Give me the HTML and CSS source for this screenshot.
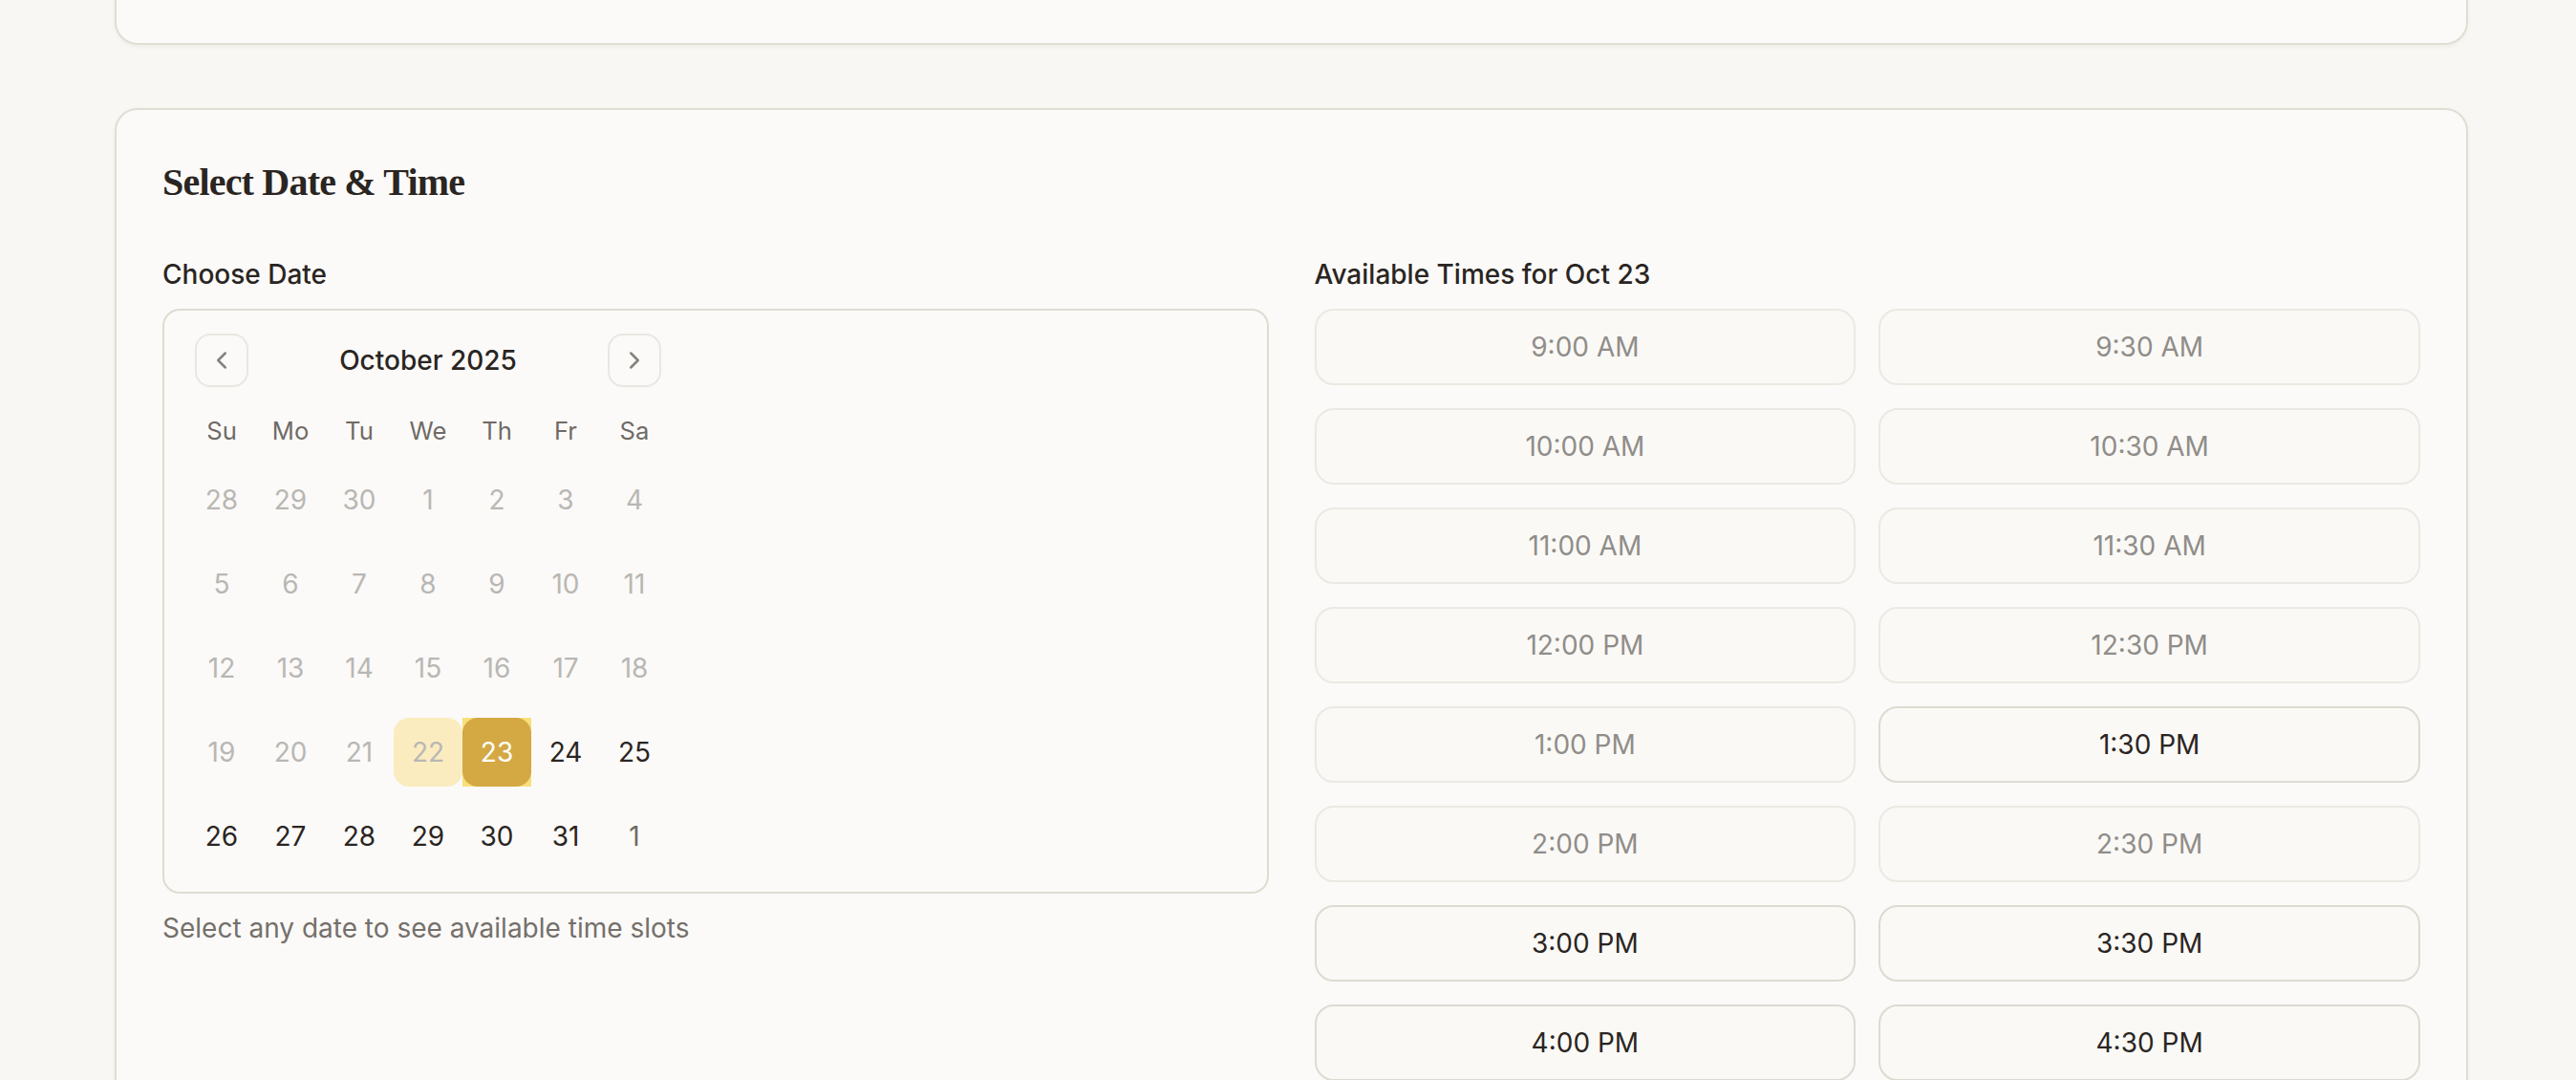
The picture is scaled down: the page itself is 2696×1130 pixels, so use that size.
FILE: index.html
```html
<!DOCTYPE html>
<html lang="en">
<head>
<meta charset="utf-8">
<title>Select Date &amp; Time</title>
<link rel="stylesheet" href="styles.css">
</head>
<body>
<div class="page">
  <section class="card card-prev"></section>

  <section class="card">
    <h2 class="card-title">Select Date &amp; Time</h2>
    <div class="columns">
      <div class="col">
        <div class="label">Choose Date</div>
        <div class="cal-box">
          <div class="cal">
            <div class="cal-caption">
              <button class="nav-btn nav-prev" aria-label="Previous month">
                <svg viewBox="0 0 24 24" width="30" height="30" fill="none" stroke="currentColor" stroke-width="2" stroke-linecap="round" stroke-linejoin="round"><path d="m15 18-6-6 6-6"/></svg>
              </button>
              <span class="cal-label">October 2025</span>
              <button class="nav-btn nav-next" aria-label="Next month">
                <svg viewBox="0 0 24 24" width="30" height="30" fill="none" stroke="currentColor" stroke-width="2" stroke-linecap="round" stroke-linejoin="round"><path d="m9 18 6-6-6-6"/></svg>
              </button>
            </div>
            <div class="cal-head">
              <span>Su</span><span>Mo</span><span>Tu</span><span>We</span><span>Th</span><span>Fr</span><span>Sa</span>
            </div>
            <div class="cal-row">
              <span class="day off">28</span><span class="day off">29</span><span class="day off">30</span><span class="day off">1</span><span class="day off">2</span><span class="day off">3</span><span class="day off">4</span>
            </div>
            <div class="cal-row">
              <span class="day off">5</span><span class="day off">6</span><span class="day off">7</span><span class="day off">8</span><span class="day off">9</span><span class="day off">10</span><span class="day off">11</span>
            </div>
            <div class="cal-row">
              <span class="day off">12</span><span class="day off">13</span><span class="day off">14</span><span class="day off">15</span><span class="day off">16</span><span class="day off">17</span><span class="day off">18</span>
            </div>
            <div class="cal-row">
              <span class="day off">19</span><span class="day off">20</span><span class="day off">21</span><span class="day off today">22</span><span class="day sel-wrap"><span class="sel">23</span></span><span class="day">24</span><span class="day">25</span>
            </div>
            <div class="cal-row">
              <span class="day">26</span><span class="day">27</span><span class="day">28</span><span class="day">29</span><span class="day">30</span><span class="day">31</span><span class="day outside">1</span>
            </div>
          </div>
        </div>
        <p class="hint">Select any date to see available time slots</p>
      </div>

      <div class="col">
        <div class="label">Available Times for Oct 23</div>
        <div class="times">
          <button class="slot disabled">9:00 AM</button>
          <button class="slot disabled">9:30 AM</button>
          <button class="slot disabled">10:00 AM</button>
          <button class="slot disabled">10:30 AM</button>
          <button class="slot disabled">11:00 AM</button>
          <button class="slot disabled">11:30 AM</button>
          <button class="slot disabled">12:00 PM</button>
          <button class="slot disabled">12:30 PM</button>
          <button class="slot disabled">1:00 PM</button>
          <button class="slot">1:30 PM</button>
          <button class="slot disabled">2:00 PM</button>
          <button class="slot disabled">2:30 PM</button>
          <button class="slot">3:00 PM</button>
          <button class="slot">3:30 PM</button>
          <button class="slot">4:00 PM</button>
          <button class="slot">4:30 PM</button>
        </div>
      </div>
    </div>
  </section>
</div>
</body>
</html>
```

FILE: styles.css
```css
* { box-sizing: border-box; }

html, body {
  margin: 0;
  padding: 0;
  background: #f8f7f3;
  font-family: Inter, "Noto Sans", "Liberation Sans", sans-serif;
  color: #2a2522;
}

.page {
  width: 2463px;
  margin-left: 120px;
  display: flex;
  flex-direction: column;
  gap: 66px;
}

.card {
  background: #fbfaf8;
  border: 2px solid #e0ded3;
  border-radius: 24px;
  padding: 48px;
  box-shadow: 0 2px 4px rgba(60, 50, 30, 0.05);
}

.card-prev {
  height: 247px;
  margin-top: -200px;
}

.card-title {
  margin: 0 0 48px;
  font-family: "Liberation Serif", "DejaVu Serif", serif;
  font-weight: 700;
  font-size: 40px;
  line-height: 56px;
  color: #2a2522;
  letter-spacing: -0.8px;
}

.columns {
  display: grid;
  grid-template-columns: 1fr 1fr;
  column-gap: 48px;
}

.label {
  font-size: 28px;
  line-height: 40px;
  font-weight: 500;
  margin-bottom: 16px;
  color: #2a2522;
}

.cal-box {
  border: 2px solid #dedcd1;
  border-radius: 18px;
  padding: 24px 24px 22px;
}

.cal {
  width: 504px;
}

.cal-caption {
  position: relative;
  height: 48px;
  padding-top: 8px;
  margin-bottom: 32px;
  display: flex;
  justify-content: center;
}

.cal-label {
  font-size: 28px;
  line-height: 40px;
  font-weight: 500;
  color: #2a2522;
}

.nav-btn {
  position: absolute;
  top: 0;
  width: 56px;
  height: 56px;
  border: 2px solid #e9e7e1;
  border-radius: 16px;
  background: transparent;
  color: #86827d;
  display: flex;
  align-items: center;
  justify-content: center;
  padding: 0;
}

.nav-prev { left: 8px; }
.nav-next { right: 8px; }

.cal-head {
  display: flex;
  height: 42px;
  align-items: center;
}

.cal-head span {
  width: 72px;
  text-align: center;
  font-size: 25.6px;
  color: #6f6a66;
}

.cal-row {
  display: flex;
  margin-top: 16px;
}

.day {
  width: 72px;
  height: 72px;
  display: flex;
  align-items: center;
  justify-content: center;
  font-size: 28px;
  color: #2a2522;
  border-radius: 16px;
}

.day.off { color: #b9b7b3; }
.day.outside { color: #6f6a66; }
.day.today { background: #faecbf; }

.sel-wrap {
  background: #f8df7c;
  border-radius: 0;
}

.sel {
  width: 72px;
  height: 72px;
  display: flex;
  align-items: center;
  justify-content: center;
  background: #d4a843;
  color: #ffffff;
  border-radius: 16px;
}

.hint {
  margin: 16px 0 0;
  font-size: 28px;
  line-height: 40px;
  color: #75706b;
}

.times {
  display: grid;
  grid-template-columns: 1fr 1fr;
  gap: 24px;
}

.slot {
  height: 80px;
  border: 2px solid #dddbd1;
  border-radius: 20px;
  background: #faf9f6;
  font-family: Inter, "Noto Sans", "Liberation Sans", sans-serif;
  font-size: 28px;
  font-weight: 400;
  color: #2a2522;
  padding: 0;
}

.slot.disabled {
  border-color: #ebe9e3;
  color: #908d89;
}
```
